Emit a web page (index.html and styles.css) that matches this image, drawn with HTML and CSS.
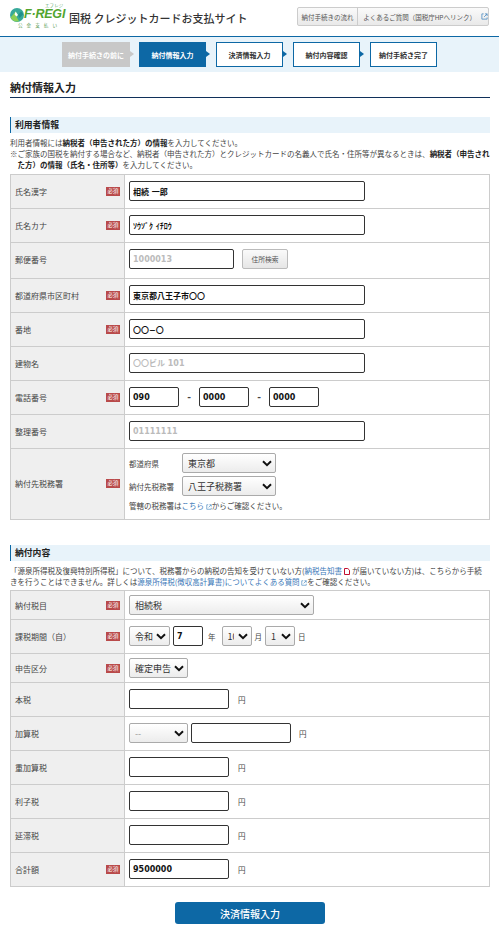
FILE: index.html
```html
<!DOCTYPE html>
<html lang="ja">
<head>
<meta charset="utf-8">
<title>国税 クレジットカードお支払サイト</title>
<link rel="stylesheet" href="styles.css">
</head>
<body>
<header class="site-header">
  <div class="logo">
    <svg class="logo-mark" viewBox="0 0 14 14" width="14" height="14" aria-hidden="true">
      <circle cx="7" cy="7" r="7" fill="#37a99a"/>
      <path d="M0.6 9.5 L5.6 3.6 L8 7 L6.4 8.4 L9 13.2 A7 7 0 0 1 0.6 9.5Z" fill="#8ccf55"/>
      <path d="M5.6 3.6 L8 7 L6.4 8.4 L4.6 6.4Z" fill="#ffffff"/>
      <path d="M8 7 L11 3.5 L13.4 6 L9.5 10Z" fill="#1f8f8a"/>
    </svg>
    <span class="logo-word">F·REGI</span>
    <span class="logo-kana">エフレジ</span>
    <span class="logo-sub">公金支払い</span>
  </div>
  <h1 class="site-title">国税 クレジットカードお支払サイト</h1>
  <nav class="head-nav">
    <a class="head-link head-flow">納付手続きの流れ</a>
    <a class="head-link head-faq">よくあるご質問（国税庁HPへリンク）
      <svg class="ext" viewBox="0 0 8 8" width="7" height="7" aria-hidden="true"><path d="M3 1H1v6h6V5M4.5 1H7v2.5M7 1L3.5 4.5" fill="none" stroke="#4a8ac0" stroke-width="0.9"/></svg>
    </a>
  </nav>
</header>

<div class="steps">
  <div class="step step-done">納付手続きの前に</div>
  <div class="step step-now">納付情報入力</div>
  <div class="step">決済情報入力</div>
  <div class="step">納付内容確認</div>
  <div class="step step-last">納付手続き完了</div>
</div>

<main class="page">
  <h2 class="page-title">納付情報入力</h2>

  <h3 class="sec-head sec-first">利用者情報</h3>
  <p class="note">利用者情報には<b>納税者（申告された方）の情報</b>を入力してください。<br>※ご家族の国税を納付する場合など、納税者（申告された方）とクレジットカードの名義人で氏名・住所等が異なるときは、<b>納税者（申告され<br><span class="indent">た方）の情報（氏名・住所等）</span></b>を入力してください。</p>

  <table class="form">
    <tr class="r34"><th><div class="lab">氏名漢字<span class="req">必須</span></div></th><td><input class="in w236" value="相続 一郎"></td></tr>
    <tr class="r34"><th><div class="lab">氏名カナ<span class="req">必須</span></div></th><td><input class="in w236" value="ｿｳｿﾞｸ ｲﾁﾛｳ"></td></tr>
    <tr class="r36"><th><div class="lab">郵便番号</div></th><td><div class="line"><input class="in w105" placeholder="1000013"><button class="search" type="button">住所検索</button></div></td></tr>
    <tr class="r34"><th><div class="lab">都道府県市区町村<span class="req">必須</span></div></th><td><input class="in w236" value="東京都八王子市〇〇"></td></tr>
    <tr class="r34"><th><div class="lab">番地<span class="req">必須</span></div></th><td><input class="in w236" value="〇〇−〇"></td></tr>
    <tr class="r34"><th><div class="lab">建物名</div></th><td><input class="in w236" placeholder="〇〇ビル 101"></td></tr>
    <tr class="r34"><th><div class="lab">電話番号<span class="req">必須</span></div></th><td><div class="line"><input class="in w50" value="090"><span class="dash">-</span><input class="in w50" value="0000"><span class="dash">-</span><input class="in w50" value="0000"></div></td></tr>
    <tr class="r34"><th><div class="lab">整理番号</div></th><td><input class="in w236" placeholder="01111111"></td></tr>
    <tr class="r71"><th><div class="lab">納付先税務署<span class="req">必須</span></div></th><td>
      <div class="office"><span class="office-lab">都道府県</span><select class="sel w94"><option>東京都</option></select></div>
      <div class="office office-2"><span class="office-lab">納付先税務署</span><select class="sel w94"><option>八王子税務署</option></select></div>
      <p class="office-note">管轄の税務署は<a class="lnk">こちら <svg class="ext" viewBox="0 0 8 8" width="6" height="6" aria-hidden="true"><path d="M3 1H1v6h6V5M4.5 1H7v2.5M7 1L3.5 4.5" fill="none" stroke="#4a8ac0" stroke-width="0.9"/></svg></a>からご確認ください。</p>
    </td></tr>
  </table>

  <h3 class="sec-head sec-second">納付内容</h3>
  <p class="note">「源泉所得税及復興特別所得税」について、税務署からの納税の告知を受けていない方(<a class="lnk">納税告知書</a><svg class="pdf" viewBox="0 0 6 7" width="6" height="7" aria-hidden="true"><path d="M0.5 0.5H3.8L5.5 2.2V6.5H0.5Z" fill="#fff" stroke="#c01030" stroke-width="1"/></svg>が届いていない方)は、こちらから手続<br>きを行うことはできません。詳しくは<a class="lnk">源泉所得税(徴収高計算書)についてよくある質問 <svg class="ext" viewBox="0 0 8 8" width="6" height="6" aria-hidden="true"><path d="M3 1H1v6h6V5M4.5 1H7v2.5M7 1L3.5 4.5" fill="none" stroke="#4a8ac0" stroke-width="0.9"/></svg></a>をご確認ください。</p>

  <table class="form">
    <tr class="r29"><th><div class="lab">納付税目<span class="req">必須</span></div></th><td><select class="sel w185"><option>相続税</option></select></td></tr>
    <tr class="r34"><th><div class="lab">課税期間（自）<span class="req">必須</span></div></th><td><div class="line">
      <select class="sel w41"><option>令和</option></select>
      <input class="in w30 gap-3" value="7"><span class="unit u-year">年</span>
      <select class="sel w30 tight"><option>10</option></select><span class="unit u-mon">月</span>
      <select class="sel w30 tight"><option>1</option></select><span class="unit u-day">日</span>
    </div></td></tr>
    <tr class="r29"><th><div class="lab">申告区分<span class="req">必須</span></div></th><td><select class="sel w59"><option>確定申告</option></select></td></tr>
    <tr class="r34"><th><div class="lab">本税</div></th><td><div class="line"><input class="in w100"><span class="unit u-yen">円</span></div></td></tr>
    <tr class="r34"><th><div class="lab">加算税</div></th><td><div class="line"><select class="sel w59 muted"><option>--</option></select><input class="in w100 gap-3"><span class="unit u-yen2">円</span></div></td></tr>
    <tr class="r34"><th><div class="lab">重加算税</div></th><td><div class="line"><input class="in w100"><span class="unit u-yen">円</span></div></td></tr>
    <tr class="r34"><th><div class="lab">利子税</div></th><td><div class="line"><input class="in w100"><span class="unit u-yen">円</span></div></td></tr>
    <tr class="r34"><th><div class="lab">延滞税</div></th><td><div class="line"><input class="in w100"><span class="unit u-yen">円</span></div></td></tr>
    <tr class="r34"><th><div class="lab">合計額<span class="req">必須</span></div></th><td><div class="line"><input class="in w100" value="9500000"><span class="unit u-yen">円</span></div></td></tr>
  </table>

  <div class="actions"><button class="submit" type="button">決済情報入力</button></div>
</main>
</body>
</html>
```
FILE: styles.css
```css
* { box-sizing: border-box; }
html, body { margin: 0; padding: 0; }
body {
  font-family: "Noto Sans CJK JP", "Noto Sans", sans-serif;
  font-size: 7.5px;
  color: #333;
  background: #fff;
  overflow: hidden;
}
h1, h2, h3, p { margin: 0; }

.site-header {
  display: flex;
  align-items: center;
  height: 37px;
  padding: 0 10px;
  border-bottom: 1px solid #0d68a5;
}
.logo { position: relative; align-self: flex-start; width: 59px; height: 30px; flex: none; }
.logo-mark { position: absolute; left: 0; top: 8px; }
.logo-word {
  position: absolute; left: 14px; top: 7px;
  font: italic bold 12.5px/14px "Liberation Sans", sans-serif;
  letter-spacing: -0.2px;
  color: #52a52f;
}
.logo-kana { position: absolute; left: 35px; top: 3px; font-size: 4.4px; line-height: 5px; letter-spacing: 0.2px; color: #4aa05a; }
.logo-sub { position: absolute; left: 8px; top: 22px; font-size: 4.6px; line-height: 6px; letter-spacing: 4px; color: #5a9c55; white-space: nowrap; }
.site-title { font-size: 11px; font-weight: 500; color: #333; white-space: nowrap; line-height: 14px; margin-top: -1px; }
.head-nav {
  display: flex;
  margin-left: auto;
  margin-top: -3px;
  height: 19px;
  width: 192px;
  border: 1px solid #ccc;
  border-radius: 2px;
  background: linear-gradient(#fafafa, #e9e9e9);
  font-size: 6.5px;
  color: #555;
}
.head-link { display: flex; align-items: center; white-space: nowrap; }
.head-flow { width: 61px; justify-content: center; border-right: 1px solid #ccc; }
.head-faq { flex: 1; padding-left: 5px; gap: 5px; }

.steps {
  display: flex;
  justify-content: center;
  gap: 10px;
  height: 35px;
  padding-top: 5px;
  background: #e8f3fa;
}
.step {
  position: relative;
  width: 67px;
  height: 25px;
  display: flex;
  align-items: center;
  justify-content: center;
  background: #fff;
  border: 1px solid #0d68a5;
  font-size: 7px;
  font-weight: 700;
  color: #333;
}
.step::after {
  content: "";
  position: absolute;
  right: -5px;
  top: 8px;
  border-left: 4px solid #0d68a5;
  border-top: 3.5px solid transparent;
  border-bottom: 3.5px solid transparent;
}
.step-last::after { display: none; }
.step-done { background: #c8c8c8; border-color: #c8c8c8; color: #fff; width: 68px; margin-right: -1px; }
.step-done::after { border-left-color: #c8c8c8; }
.step-now { background: #0d68a5; color: #fff; }

.page { padding: 0 9px 0 10px; }
.page-title {
  height: 26px;
  padding-top: 8px;
  font-size: 11px;
  line-height: 14px;
  font-weight: 700;
  color: #222;
  border-bottom: 1px solid #10305a;
}
.sec-head {
  height: 16px;
  padding-left: 4px;
  background: #e8f3fa;
  border-left: 1px solid #0d68a5;
  font-size: 8.8px;
  line-height: 16px;
  font-weight: 700;
  color: #222;
}
.sec-first { margin-top: 19px; }
.sec-second { margin-top: 25px; }
.note { margin-top: 4px; line-height: 11px; color: #444; white-space: nowrap; }
.sec-first + .note { height: 33px; margin-bottom: 4px; }
.sec-second + .note { height: 22px; margin-bottom: 3px; }
.note b { color: #222; }
.indent { padding-left: 7.5px; }
.lnk { display: inline-block; line-height: 11px; height: 11px; color: #3a78b8; }
.ext { vertical-align: -0.5px; }
.pdf { vertical-align: -1px; margin: 0 2px; }

.form { width: 480px; border-collapse: collapse; table-layout: fixed; }
.form th, .form td { border: 1px solid #ccc; padding: 0 4px; vertical-align: top; }
.form th { width: 114px; background: #efefef; font-weight: 400; text-align: left; }
.r29 th, .r29 td { height: 29px; padding-top: 4px; }
.r34 th, .r34 td { height: 34px; padding-top: 6px; }
.r36 th, .r36 td { height: 36px; padding-top: 6px; }
.form .r71 th, .form .r71 td { height: 71px; padding-top: 4px; }
.form .r71 th { vertical-align: middle; padding-top: 0; padding-bottom: 2px; }
.lab { display: flex; justify-content: space-between; align-items: center; height: 20px; font-size: 8px; color: #444; white-space: nowrap; }
.req {
  width: 14px;
  height: 9px;
  background: #b94a4a;
  color: #fff;
  font-size: 5.5px;
  line-height: 9px;
  text-align: center;
}
.line { display: flex; align-items: center; }
.in {
  display: block;
  height: 20px;
  padding: 0 3px;
  border: 1px solid #333;
  border-radius: 2px;
  background: #fff;
  font-family: "DejaVu Sans", "Noto Sans CJK JP", sans-serif;
  font-size: 8px;
  font-weight: 700;
  color: #111;
  outline: none;
}
.in::placeholder { color: #bbb; opacity: 1; }
.w236 { width: 236px; }
.w105 { width: 105px; }
.w100 { width: 100px; }
.w50 { width: 50px; }
.w30 { width: 30px; }
.gap-3 { margin-left: 3px; }
.search {
  margin-left: 8px;
  width: 46px;
  height: 20px;
  padding: 0;
  border: 1px solid #bbb;
  border-radius: 2px;
  background: linear-gradient(#fafafa, #e6e6e6);
  font: 6.8px "Noto Sans CJK JP", sans-serif;
  color: #555;
}
.dash { width: 20px; text-align: center; font: 700 9px "DejaVu Sans", sans-serif; color: #444; }
.sel {
  display: block;
  appearance: none;
  -webkit-appearance: none;
  height: 20px;
  padding: 0 14px 0 5px;
  border: 1px solid #aaa;
  border-radius: 2px;
  background-color: #f4f4f4;
  background-image: url("data:image/svg+xml,%3Csvg xmlns='http://www.w3.org/2000/svg' width='10' height='7' viewBox='0 0 10 7'%3E%3Cpath d='M1 1.2l4 4 4-4' fill='none' stroke='%23111' stroke-width='2'/%3E%3C/svg%3E"), linear-gradient(#fff, #ececec);
  background-repeat: no-repeat;
  background-position: right 3px center, 0 0;
  font-family: "Noto Sans CJK JP", sans-serif;
  font-size: 9px;
  color: #333;
  outline: none;
}
.tight { padding-right: 17px; }
.w185 { width: 185px; }
.w94 { width: 94px; }
.w59 { width: 59px; }
.w41 { width: 41px; }
.muted { color: #999; }
.unit { font-size: 7.5px; color: #444; }
.u-year { margin: 0 6px 0 5px; }
.u-mon { margin: 0 3px; }
.u-day { margin-left: 3px; }
.u-yen { margin-left: 9px; }
.u-yen2 { margin-left: 8px; }
.office { display: flex; align-items: center; font-size: 7.5px; color: #444; }
.office-lab { width: 53px; white-space: nowrap; }
.office-2 { margin-top: 3px; }
.office-note { margin-top: 4px; font-size: 7.5px; line-height: 11px; color: #444; }

.actions { display: flex; justify-content: center; margin-top: 15px; }
.submit {
  width: 150px;
  height: 22px;
  border: none;
  border-radius: 3px;
  background: #0d68a5;
  color: #fff;
  font: 500 10px "Noto Sans CJK JP", sans-serif;
}
```
